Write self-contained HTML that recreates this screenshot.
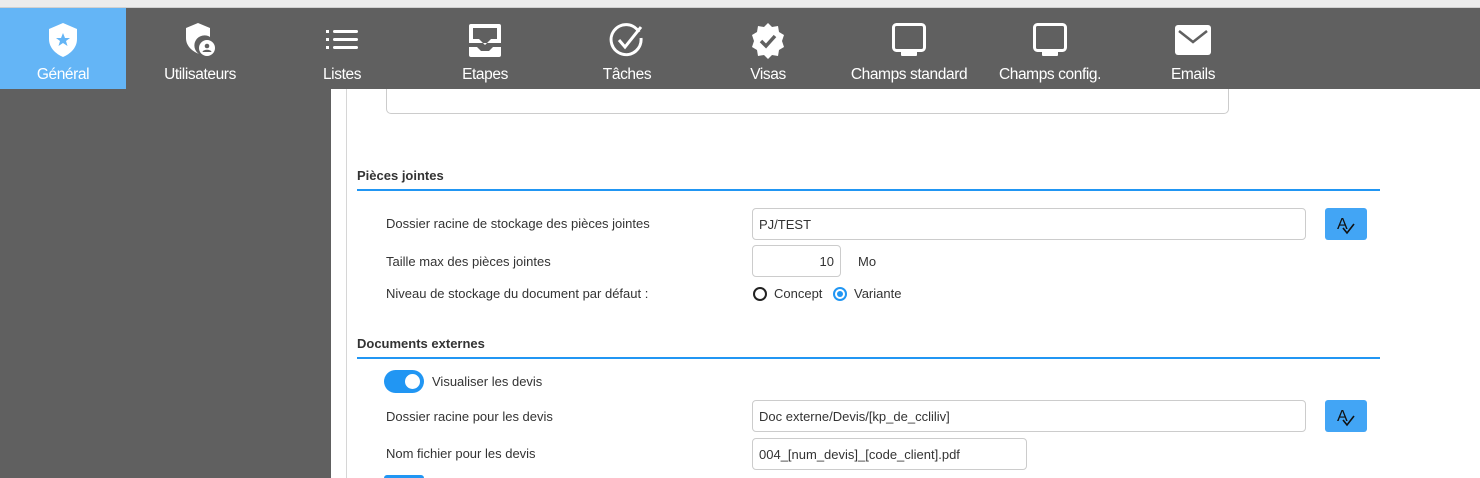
<!DOCTYPE html>
<html><head><meta charset="utf-8"><style>
*{box-sizing:border-box;margin:0;padding:0}
html,body{width:1480px;height:478px;overflow:hidden}
body{background:#fff;font-family:"Liberation Sans",Arial,sans-serif;position:relative;color:#333}
.top{position:absolute;left:0;top:0;width:1480px;height:8px;background:#ececec;border-bottom:1px solid #d0d0d0}
.nav{position:absolute;left:0;top:8px;width:1480px;height:81px;background:#606060;z-index:5}
.tab{position:absolute;top:0;height:81px;color:#fff;font-size:15.5px;text-align:center;letter-spacing:-0.4px}
.tab .lbl{position:absolute;top:58px;left:0;right:0}
.tab svg{position:absolute;top:14px;left:50%;transform:translateX(-50%)}
.side{position:absolute;left:0;top:89px;width:331px;height:389px;background:#606060}
.vl{position:absolute;left:346px;top:89px;width:1px;height:389px;background:#d6d6d6}
.box{position:absolute;border:1px solid #ccc;border-radius:4px;background:#fff;font-size:13px;color:#333;padding:0 6px;display:flex;align-items:center}
.h{position:absolute;left:357px;font-size:13px;font-weight:bold;color:#333}
.line{position:absolute;left:357px;width:1023px;height:2px;background:#2196f3}
.t{position:absolute;font-size:13px;color:#333}
.btn{position:absolute;left:1325px;width:42px;height:32px;background:#42a5f5;border-radius:3px}
</style></head><body>
<div class="top"></div>
<div class="nav">
 <div class="tab" style="left:0;width:126px;background:#64b5f6"><svg width="34" height="36" viewBox="0 0 34 36"><path d="M17 1 L31 7 V17 C31 26 24 32 17 35 C10 32 3 26 3 17 V7 Z" fill="#fff"/><path d="M17 11 L19 16 L24 16 L20 19 L21.5 24 L17 21 L12.5 24 L14 19 L10 16 L15 16 Z" fill="#64b5f6"/></svg><div class="lbl">Général</div></div>
 <div class="tab" style="left:140px;width:120px"><svg width="34" height="36" viewBox="0 0 34 36"><path d="M15 1 L27 6 V15 A9 9 0 0 0 16 32 C9 29 3 24 3 16 V6 Z" fill="#fff"/><circle cx="24" cy="26" r="8" fill="#fff"/><circle cx="24" cy="24" r="2.3" fill="#606060"/><path d="M19.5 30 C20 27 28 27 28.5 30 Z" fill="#606060"/></svg><div class="lbl">Utilisateurs</div></div>
 <div class="tab" style="left:292px;width:100px"><svg width="36" height="36" viewBox="0 0 36 36"><g fill="#fff"><rect x="2" y="8" width="3" height="3"/><rect x="2" y="16" width="3" height="3"/><rect x="2" y="24" width="3" height="3"/><rect x="9" y="8" width="25" height="3" rx="1.5"/><rect x="9" y="16" width="25" height="3" rx="1.5"/><rect x="9" y="24" width="25" height="3" rx="1.5"/></g></svg><div class="lbl">Listes</div></div>
 <div class="tab" style="left:435px;width:100px"><svg width="36" height="36" viewBox="0 0 36 36"><path d="M4 2 H32 A2 2 0 0 1 34 4 V21 H2 V4 A2 2 0 0 1 4 2 Z M6 6 V17 H12 L18 23 L24 17 H30 V6 Z" fill="#fff" fill-rule="evenodd"/><path d="M2 25 H10 L14 29 H22 L26 25 H34 V33 A2 2 0 0 1 32 35 H4 A2 2 0 0 1 2 33 Z" fill="#fff"/></svg><div class="lbl">Etapes</div></div>
 <div class="tab" style="left:577px;width:100px"><svg width="38" height="38" viewBox="0 0 38 38"><path d="M31 10 A15 15 0 1 0 33 16" fill="none" stroke="#fff" stroke-width="3"/><path d="M11 18 L17 25 L33 5" fill="none" stroke="#fff" stroke-width="3"/></svg><div class="lbl">Tâches</div></div>
 <div class="tab" style="left:718px;width:100px"><svg width="38" height="38" viewBox="0 0 38 38"><path d="M19 1 L23 5 L29 4 L30 10 L35 13 L33 19 L35 25 L30 28 L29 34 L23 33 L19 37 L15 33 L9 34 L8 28 L3 25 L5 19 L3 13 L8 10 L9 4 L15 5 Z" fill="#fff"/><path d="M12 19 L17 24 L26 14" fill="none" stroke="#606060" stroke-width="3.5"/></svg><div class="lbl">Visas</div></div>
 <div class="tab" style="left:844px;width:130px"><svg width="38" height="36" viewBox="0 0 38 36"><rect x="3.5" y="2.5" width="31" height="26" rx="3" fill="none" stroke="#fff" stroke-width="3"/><rect x="11" y="29" width="16" height="5" rx="1" fill="#fff"/></svg><div class="lbl">Champs standard</div></div>
 <div class="tab" style="left:990px;width:120px"><svg width="38" height="36" viewBox="0 0 38 36"><rect x="3.5" y="2.5" width="31" height="26" rx="3" fill="none" stroke="#fff" stroke-width="3"/><rect x="11" y="29" width="16" height="5" rx="1" fill="#fff"/></svg><div class="lbl">Champs config.</div></div>
 <div class="tab" style="left:1143px;width:100px"><svg width="40" height="36" viewBox="0 0 40 36"><rect x="2" y="3" width="36" height="30" rx="3" fill="#fff"/><path d="M6 9 L20 20 L34 9" fill="none" stroke="#606060" stroke-width="2.5"/></svg><div class="lbl">Emails</div></div>
</div>
<div class="side"></div>
<div class="vl"></div>
<div class="box" style="left:386px;top:89px;width:843px;height:25px;border-top:none;border-radius:0 0 5px 5px"></div>

<div class="h" style="top:168px">Pièces jointes</div>
<div class="line" style="top:189px"></div>
<div class="t" style="left:386px;top:216px">Dossier racine de stockage des pièces jointes</div>
<div class="box" style="left:752px;top:208px;width:554px;height:32px">PJ/TEST</div>
<div class="btn" style="top:208px"><svg width="42" height="32" viewBox="0 0 42 32"><text x="12" y="21" font-size="16" font-family="Liberation Sans" fill="#111">A</text><path d="M18 20 L22 25 L29 16" fill="none" stroke="#111" stroke-width="1.6"/></svg></div>
<div class="t" style="left:386px;top:254px">Taille max des pièces jointes</div>
<div class="box" style="left:752px;top:245px;width:89px;height:32px;justify-content:flex-end">10</div>
<div class="t" style="left:858px;top:254px">Mo</div>
<div class="t" style="left:386px;top:286px">Niveau de stockage du document par défaut :</div>
<div style="position:absolute;left:753px;top:287px;width:14px;height:14px;border:2px solid #222;border-radius:50%"></div>
<div class="t" style="left:774px;top:286px">Concept</div>
<div style="position:absolute;left:833px;top:287px;width:14px;height:14px;border:2px solid #2196f3;border-radius:50%"><div style="position:absolute;left:2px;top:2px;width:6px;height:6px;border-radius:50%;background:#2196f3"></div></div>
<div class="t" style="left:854px;top:286px">Variante</div>

<div class="h" style="top:336px">Documents externes</div>
<div class="line" style="top:357px"></div>
<div style="position:absolute;left:384px;top:370px;width:40px;height:23px;border-radius:12px;background:#2196f3"><div style="position:absolute;right:4px;top:4px;width:15px;height:15px;border-radius:50%;background:#fff"></div></div>
<div class="t" style="left:432px;top:374px">Visualiser les devis</div>
<div class="t" style="left:386px;top:409px">Dossier racine pour les devis</div>
<div class="box" style="left:752px;top:400px;width:554px;height:32px">Doc externe/Devis/[kp_de_ccliliv]</div>
<div class="btn" style="top:400px"><svg width="42" height="32" viewBox="0 0 42 32"><text x="12" y="21" font-size="16" font-family="Liberation Sans" fill="#111">A</text><path d="M18 20 L22 25 L29 16" fill="none" stroke="#111" stroke-width="1.6"/></svg></div>
<div class="t" style="left:386px;top:446px">Nom fichier pour les devis</div>
<div class="box" style="left:752px;top:438px;width:275px;height:32px">004_[num_devis]_[code_client].pdf</div>
<div style="position:absolute;left:384px;top:475px;width:40px;height:3px;border-radius:12px 12px 0 0;background:#2196f3"></div>
</body></html>
